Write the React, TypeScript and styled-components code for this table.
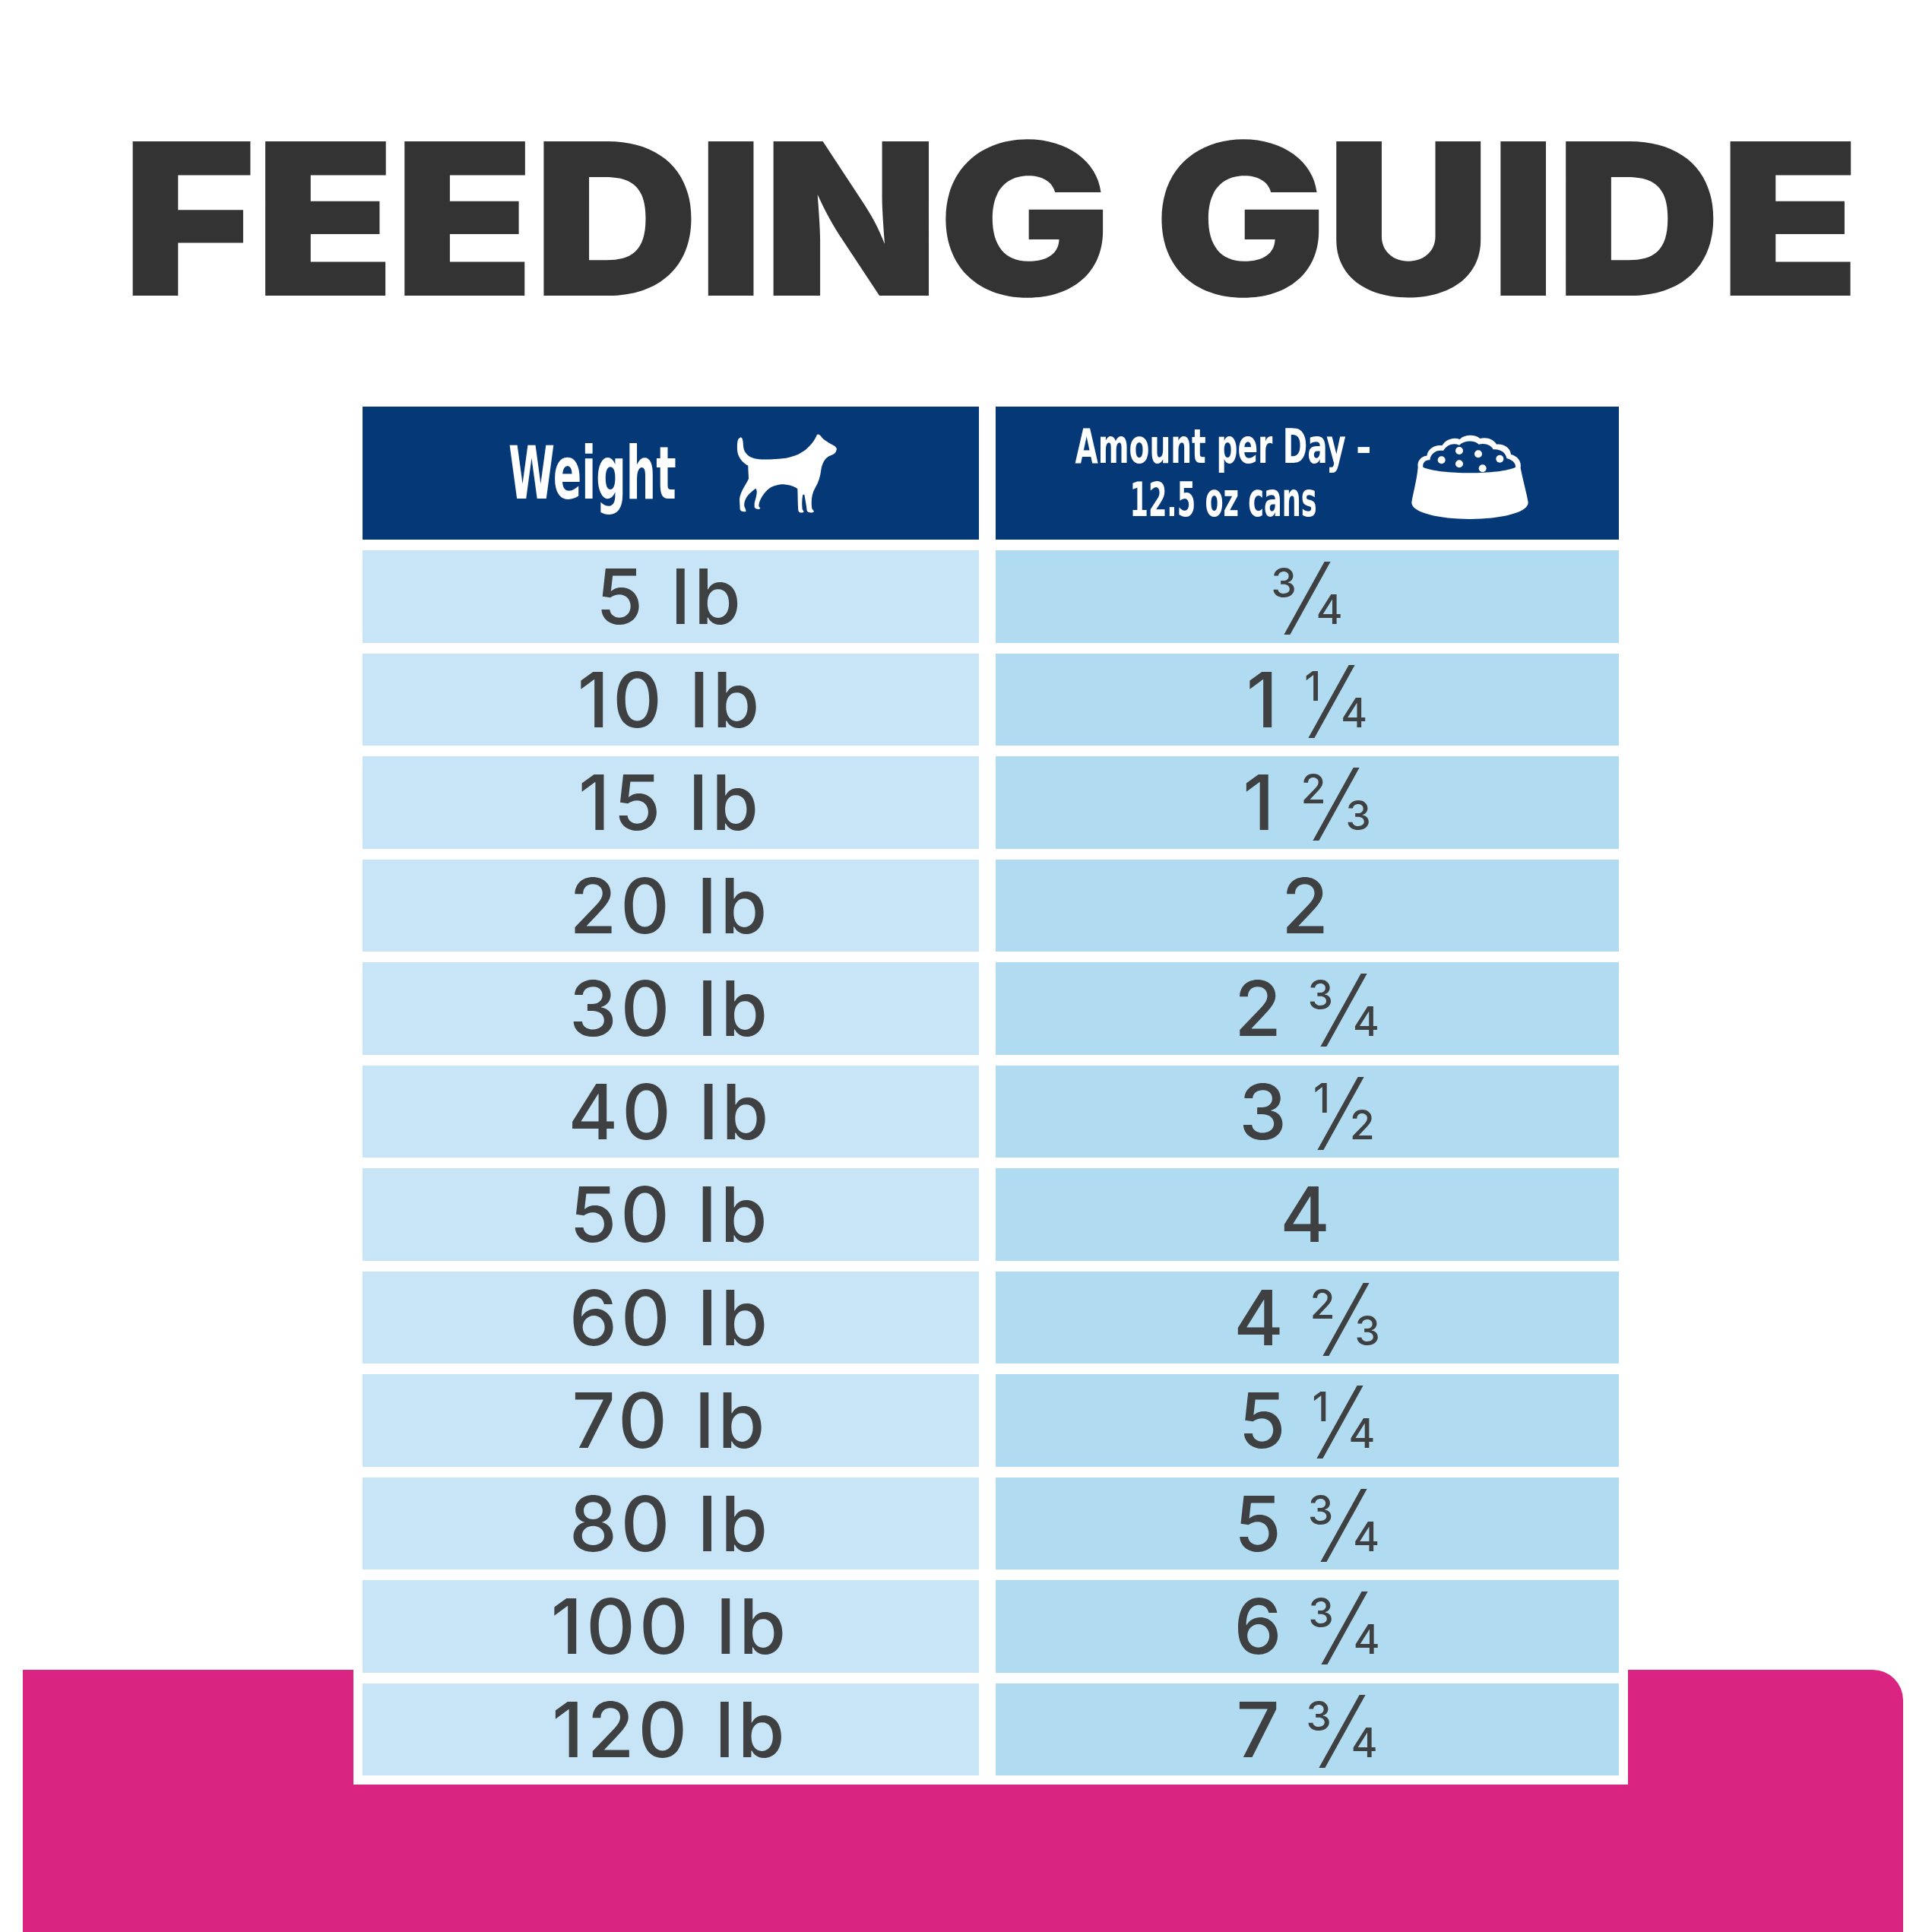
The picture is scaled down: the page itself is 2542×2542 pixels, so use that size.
import React from "react";
import styled, { createGlobalStyle } from "styled-components";

const GlobalStyle = createGlobalStyle`
  html, body {
    margin: 0;
    padding: 0;
    background: #ffffff;
  }
  body {
    font-family: Inter, "Noto Sans", sans-serif;
  }
`;

type Amount = { whole: number | null; frac: [number, number] | null };

const rows: { weight: string; amount: Amount }[] = [
  { weight: "5 lb", amount: { whole: null, frac: [3, 4] } },
  { weight: "10 lb", amount: { whole: 1, frac: [1, 4] } },
  { weight: "15 lb", amount: { whole: 1, frac: [2, 3] } },
  { weight: "20 lb", amount: { whole: 2, frac: null } },
  { weight: "30 lb", amount: { whole: 2, frac: [3, 4] } },
  { weight: "40 lb", amount: { whole: 3, frac: [1, 2] } },
  { weight: "50 lb", amount: { whole: 4, frac: null } },
  { weight: "60 lb", amount: { whole: 4, frac: [2, 3] } },
  { weight: "70 lb", amount: { whole: 5, frac: [1, 4] } },
  { weight: "80 lb", amount: { whole: 5, frac: [3, 4] } },
  { weight: "100 lb", amount: { whole: 6, frac: [3, 4] } },
  { weight: "120 lb", amount: { whole: 7, frac: [3, 4] } },
];

const DogIcon = () => (
  <svg width="150" height="125" viewBox="0 0 450 375">
    <path
      fill="#ffffff"
      d="M38,48 C28,50 26,70 27,95 C28,120 45,145 70,158 C70,175 72,195 72,210
         C60,235 40,260 36,290 L38,330 C40,340 55,342 62,338 L58,325
         C52,318 55,300 60,290 C70,270 90,255 100,248 C110,260 100,285 95,305
         L95,322 C100,332 115,332 118,326 L112,318 C112,300 125,275 145,255
         C160,240 180,235 200,232 C230,232 255,240 265,250
         C266,275 266,310 268,335 C270,345 286,346 290,340 L284,330
         C282,310 282,290 286,272 L292,272 C296,295 300,315 302,335
         C304,345 328,346 330,338 L322,328 C318,300 320,270 335,245
         C348,225 355,200 358,175 C362,150 372,130 390,120
         C402,115 412,112 416,104 L420,92 C418,84 410,78 400,74
         C385,66 372,58 362,48 C355,38 348,32 342,36 C336,50 325,70 305,88
         C285,108 255,122 220,128 C170,134 120,136 95,130
         C72,124 55,108 52,88 C50,70 50,55 46,50 C44,46 40,46 38,48 Z"
    />
  </svg>
);

const BowlIcon = () => (
  <svg width="200" height="140" viewBox="0 0 600 420">
    <path
      fill="#ffffff"
      d="M95,185 C90,160 110,140 130,140 C135,110 165,95 190,100
         C205,75 235,65 260,75 C280,55 320,55 340,72 C365,65 395,75 405,95
         C435,92 460,110 462,135 C485,140 505,160 500,188
         C510,240 525,290 530,325 C530,365 420,390 300,390
         C180,390 70,365 70,325 C75,290 90,240 95,185 Z"
    />
    <path
      fill="#053876"
      d="M115,185 C112,168 125,155 142,157 C145,130 168,115 195,120
         C210,95 235,88 258,98 C280,78 318,78 335,95 C360,88 385,98 392,115
         C420,112 442,128 445,150 C465,155 482,168 480,185
         C420,215 180,215 115,185 Z"
    />
    <g fill="#ffffff">
      <circle cx="258" cy="120" r="15" />
      <circle cx="333" cy="133" r="15" />
      <circle cx="188" cy="157" r="15" />
      <circle cx="258" cy="172" r="15" />
      <circle cx="418" cy="152" r="15" />
      <circle cx="350" cy="190" r="15" />
    </g>
  </svg>
);

const Fraction = ({ num, den }: { num: number; den: number }) => (
  <Frac>
    <Num>{num}</Num>
    <Slash />
    <Den>{den}</Den>
  </Frac>
);

const App = () => {
  return (
    <Page>
      <GlobalStyle />
      <Content>
        <Title>FEEDING GUIDE</Title>
        <TableFrame>
          <Table>
            <HeadCell shift={19}>
              <HeadGroup gap={74}>
                <Squeeze w={214}>
                  <WeightLabel>Weight</WeightLabel>
                </Squeeze>
                <DogIcon />
              </HeadGroup>
            </HeadCell>
            <HeadCell shift={14}>
              <HeadGroup gap={34}>
                <AmountLabel>
                  <Squeeze w={380}>
                    <Line s={0.69}>Amount per Day –</Line>
                  </Squeeze>
                  <Squeeze w={380}>
                    <Line s={0.62}>12.5 oz cans</Line>
                  </Squeeze>
                </AmountLabel>
                <BowlIcon />
              </HeadGroup>
            </HeadCell>
            {rows.map((row) => (
              <React.Fragment key={row.weight}>
                <Cell tone="left">
                  <Big>{row.weight}</Big>
                </Cell>
                <Cell tone="right">
                  <AmountGroup>
                    {row.amount.whole !== null && <Big>{row.amount.whole}</Big>}
                    {row.amount.frac && (
                      <Fraction num={row.amount.frac[0]} den={row.amount.frac[1]} />
                    )}
                  </AmountGroup>
                </Cell>
              </React.Fragment>
            ))}
          </Table>
        </TableFrame>
      </Content>
      <PinkBand />
    </Page>
  );
};

export default App;

const Page = styled.div`
  width: 2542px;
  height: 2542px;
  overflow: hidden;
  background: #ffffff;
  display: flex;
  flex-direction: column;
`;

const Content = styled.div`
  position: relative;
  z-index: 1;
  padding-left: 64px;
  display: flex;
  flex-direction: column;
  align-items: center;
`;

const Title = styled.h1`
  margin: 148px 0 0;
  font-family: Inter, "Noto Sans", sans-serif;
  font-weight: 900;
  font-size: 279px;
  line-height: 279px;
  letter-spacing: -2px;
  color: #333333;
  white-space: nowrap;
  transform: scaleX(1.084);
`;

const TableFrame = styled.div`
  margin-top: 96px;
  background: #ffffff;
  padding: 12px;
`;

const Table = styled.div`
  display: grid;
  grid-template-columns: 811px 820px;
  grid-template-rows: 175px repeat(12, 121.5px);
  column-gap: 22px;
  row-gap: 14px;
`;

const HeadCell = styled.div<{ shift: number }>`
  background: #053876;
  display: flex;
  align-items: center;
  justify-content: center;
  padding-left: ${(p) => p.shift}px;
`;

const HeadGroup = styled.div<{ gap: number }>`
  display: flex;
  align-items: center;
  gap: ${(p) => p.gap}px;
`;

const Squeeze = styled.div<{ w: number }>`
  width: ${(p) => p.w}px;
  display: flex;
  justify-content: center;
`;

const WeightLabel = styled.span`
  flex-shrink: 0;
  font-family: "DejaVu Sans Condensed", "DejaVu Sans", sans-serif;
  font-weight: 700;
  font-size: 96px;
  line-height: 1;
  color: #ffffff;
  white-space: nowrap;
  transform: scaleX(0.64);
`;

const AmountLabel = styled.div`
  display: flex;
  flex-direction: column;
  align-items: center;
`;

const Line = styled.span<{ s: number }>`
  flex-shrink: 0;
  font-family: "DejaVu Sans Condensed", "DejaVu Sans", sans-serif;
  font-weight: 700;
  font-size: 63px;
  line-height: 70px;
  color: #ffffff;
  white-space: nowrap;
  transform: scaleX(${(p) => p.s});
`;

const Cell = styled.div<{ tone: "left" | "right" }>`
  background: ${(p) => (p.tone === "left" ? "#c7e5f6" : "#b0dbf0")};
  display: flex;
  align-items: center;
  justify-content: center;
`;

const Big = styled.span`
  font-family: Inter, "Noto Sans", sans-serif;
  font-weight: 500;
  font-size: 100px;
  line-height: 73px;
  letter-spacing: 5px;
  color: #3e4042;
  white-space: pre;
`;

const AmountGroup = styled.div`
  display: flex;
  align-items: center;
  gap: 30px;
`;

const Frac = styled.span`
  display: inline-flex;
  height: 73px;
`;

const Num = styled.span`
  align-self: flex-start;
  font-family: Inter, "Noto Sans", sans-serif;
  font-weight: 500;
  font-size: 53px;
  line-height: 38px;
  color: #3e4042;
`;

const Den = styled(Num)`
  align-self: flex-end;
`;

const Slash = styled.span`
  align-self: flex-start;
  flex-shrink: 0;
  width: 8px;
  height: 96px;
  margin: -9px 8px 0 10px;
  background: #3e4042;
  transform: skewX(-29deg);
`;

const PinkBand = styled.div`
  margin: -151px 0 0 30px;
  width: 2474px;
  height: 345px;
  flex-shrink: 0;
  background: #da2482;
  border-top-right-radius: 40px;
`;
